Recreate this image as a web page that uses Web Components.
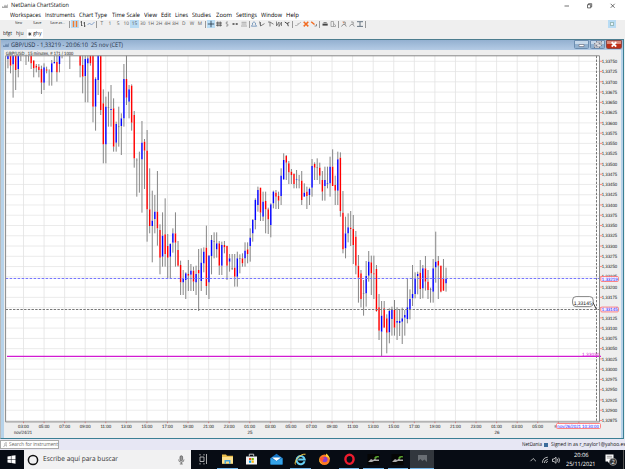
<!DOCTYPE html>
<html lang="es">
<head>
<meta charset="utf-8">
<title>NetDania ChartStation</title>
<style>
  html, body { margin: 0; height: 100%; overflow: hidden; }
  body { font-family: "Open Sans", "Noto Sans", sans-serif; color: #333; background: #efefef; text-rendering: geometricPrecision; }
</style>
</head>
<body>
<chart-station></chart-station>

<script>
// => Texto ajustado a un ancho fijo (atributo w)
customElements.define('fit-text', class extends HTMLElement {
  constructor() {
    super();
    this.attachShadow({mode: 'open'}).innerHTML = `
      <style>
        :host { display: inline-block; white-space: nowrap; flex: none; line-height: 1.2; }
        span { display: inline-block; transform-origin: 0 50%; }
      </style><span><slot></slot></span>`;
  }
  connectedCallback() {
    const w = parseFloat(this.getAttribute('w'));
    if (!w) return;
    const span = this.shadowRoot.querySelector('span');
    const natural = span.getBoundingClientRect().width;
    span.style.transform = `scaleX(${w / natural})`;
    this.style.width = w + 'px';
  }
});

// => Barra de titulo de la aplicacion
customElements.define('title-bar', class extends HTMLElement {
  constructor() {
    super();
    this.attachShadow({mode: 'open'}).innerHTML = `
      <style>
        :host { display: flex; align-items: center; height: 11px; padding: 0 9px 0 2px; background: #fff; font-size: 6px; color: #111; }
        svg { display: block; }
        .logo { margin-right: 2.5px; }
        .win { margin-left: auto; }
      </style>
      <svg class="logo" width="6" height="6" viewBox="0 0 6 6"><path d="M0 5V3L1.5 4L3 1.5L4 3L5.8 1V5Z" fill="#aaa"/></svg>
      <fit-text w="58">NetDania ChartStation</fit-text>
      <svg class="win" width="52" height="8" viewBox="0 0 52 8" fill="none" stroke="#333" stroke-width=".7">
        <path d="M.5 4H5M23.5 2.7h3.2v3.2h-3.2zM24.5 2.7V1.7h3.2v3.2h-1M46.7 1.8l4 4M50.7 1.8l-4 4"/>
      </svg>`;
  }
});

// => Menu principal
customElements.define('menu-bar', class extends HTMLElement {
  constructor() {
    super();
    const items = [['Workspaces', 31], ['Instruments', 30], ['Chart Type', 28], ['Time Scale', 28], ['View', 13], ['Edit', 10],
      ['Lines', 13], ['Studies', 19], ['Zoom', 16], ['Settings', 21], ['Window', 21], ['Help', 13]];
    this.attachShadow({mode: 'open'}).innerHTML = `
      <style>
        :host { display: flex; align-items: center; gap: 4.2px; height: 9px; padding-left: 10px; background: #fff; font-size: 6px; color: #000; }
      </style>` + items.map(i => `<fit-text w="${i[1]}">${i[0]}</fit-text>`).join('');
  }
});

// => Barra de herramientas
const ICONS = {
  candle: '<path d="M2.5 1v6M5.5 1v6" stroke="#f27a30" stroke-width="1.4"/>',
  bars: '<path d="M2.5 1v5M1.5 2h1M5.5 2v5M2.5 5.5h1M4.5 3h1M5.5 6h1"/>',
  line: '<path d="M.5 5L2.5 3L4.5 5L7.5 2" stroke="#6b8fc4"/>',
  cross: '<path d="M4 .8v6.4M.8 4h6.4" stroke="#234"/>',
  hash: '<path d="M2.8 1.5v5M5.2 1.5v5M1 3h6M1 5.2h6"/>',
  s: '<path d="M5 2H3.3V4H4.8V6H3" stroke="#888"/>',
  dots: '<path d="M1.5 4h2M4.7 4h2" stroke-width="1.4"/>',
  list: '<path d="M1.5 2.3h5M1.5 4h5M1 6h6" stroke="#999"/>',
  bell: '<path d="M1.3 6.2L2.5 4.8V3Q4 .5 5.5 3V4.8L6.7 6.2Z" stroke="#668bb5"/>',
  tool1: '<path d="M1.5 1.5L2.6 6L6.5 3.6M2.5 2V6" stroke="#666"/>',
  tool2: '<path d="M1 2H3L6.5 4.2M3 2V6.5" stroke="#666"/>',
  tool3: '<path d="M1.5 1.5V6L4 2V6.5L6.5 2V6" stroke="#666"/>',
  tool4: '<path d="M1.8 2L4 3.5L6.3 2.5M4.5 3.5L5.3 6.2" stroke-width="1"/>',
  pen: '<path d="M1 5.5H3L7 2M3 4.3L5 3.5" stroke="#aaa"/>',
  del: '<path d="M1.7 1.8L6.3 6.4M6.3 1.8L1.7 6.4" stroke="#f26b21" stroke-width="1.5"/>',
  move: '<path d="M1.2 1.7L4.5 4.5" stroke="#f26b21" stroke-width="1.4"/><path d="M4.5 6h2V4" stroke="#777"/>',
  print: '<path d="M2.5 2.6h3.2" stroke="#777" stroke-width="1"/><path d="M1.5 4.6h5.2" stroke-width="2"/>',
  copy: '<path d="M2 1.5H4.5V6.5H2ZM4.5 3.5L6.5 5V6.5H4" stroke="#999"/>',
  zin: '<path d="M1.5 6.5L3.3 4.3M3 2H5.2V4.4H3.2M5 4.5L6.3 6.5" stroke="#777"/><path d="M2.6 2l1.2 1" stroke="#f26b21"/>',
  zout: '<path d="M1.5 6.5L3.3 4.3M3 2H5.2V4.4H3.2M5 4.5L6.3 6.5" stroke="#888"/>',
  fit: '<path d="M1 1.7h6M1 6.4h6M4 2v4" stroke="#456"/>'
};
customElements.define('tool-bar', class extends HTMLElement {
  constructor() {
    super();
    const on = ['candle', '15', 'cross'];
    const cell = n => `<div class="cell${on.includes(n) ? ' on' : ''}">` +
      (ICONS[n] ? `<svg width="8" height="8" viewBox="0 0 8 8" fill="none" stroke="#444" stroke-width=".8">${ICONS[n]}</svg>` : n) + '</div>';
    const groups = ['candle bars line', 'T 1 5 10 15 30 1H 2H 4H 8H D W M', 'cross hash s dots list', 'bell tool1 tool2 tool3 tool4',
      'pen del move', 'print copy', 'zin zout fit', ''];
    this.attachShadow({mode: 'open'}).innerHTML = `
      <style>
        :host { display: flex; align-items: center; height: 8.5px; padding-right: 9px; background: #efefef; font-size: 4.8px; color: #555; }
        .file { display: flex; gap: 11px; width: 53px; padding-left: 15px; font-size: 3.8px; color: #333; }
        .file fit-text:last-child { margin-left: -3px; }
        .sep { width: .7px; height: 6.5px; margin: 0 .95px; background: #999; }
        .cell { flex: none; width: 8.2px; height: 8.2px; display: flex; align-items: center; justify-content: center; line-height: 1; }
        .on { background: #b9dcf4; }
        .end { margin-left: auto; width: 8px; height: 8px; background: #b9dcf4; display: flex; align-items: center; justify-content: center; }
        .end i { width: 2px; height: 2px; border: .8px solid #9bb; background: #e8f4fb; }
      </style>
      <div class="file"><fit-text w="7">New</fit-text><fit-text w="8.5">Save</fit-text><fit-text w="15">Save as...</fit-text></div>` +
      groups.map(g => '<div class="sep"></div>' + (g ? g.split(' ').map(cell).join('') : '')).join('') +
      '<div class="end"><i></i></div>';
  }
});

// => Pestañas de espacios de trabajo
customElements.define('tab-strip', class extends HTMLElement {
  constructor() {
    super();
    this.attachShadow({mode: 'open'}).innerHTML = `
      <style>
        :host { display: flex; height: 10px; align-items: center; padding-left: 3px; font-size: 5.4px; color: #222; background: #efefef; }
        .t { margin-right: 4px; }
        .on { display: flex; align-items: center; height: 9px; padding: 0 1.5px; margin-left: -1px; background: #fff; }
        svg { margin-right: 1.6px; }
      </style>
      <fit-text class="t" w="9">bfgt</fit-text><fit-text class="t" w="7.5">hju</fit-text>
      <div class="on"><svg width="3.6" height="4" viewBox="0 0 4 4" stroke="#222" stroke-width=".8"><path d="M2 0v4M.3 1l3.4 2M3.7 1L.3 3"/></svg><fit-text w="8.5">ghy</fit-text></div>`;
  }
});

// => Velas: "max min [color techo suelo]", alturas en tercios de pixel desde la base de cada tramo
const RUNS = [
  {base: 150, bars: `17 55 b 17 27,17 70 r 17 47,17 143 b 17 43,17 120 r 17 60,17 82 b 17 57,17 33,17 17,17 45,17 35,17 57 r 17 40,
    30 82 r 32 55,42 67 r 47 53,42 82 r 50 60,47 132 r 57 98,40 120 b 52 98,50 70 r 58 62,58 107,30 107 b 40 67,17 40 b 36 40,17 95 r 36 67,
    17 67 b 17 42,17 25,17 17,17 17,17 57,17 17,17 17,17 17,17 82 r 17 47,17 130 r 45 80,
    17 157 b 27 78,17 157 b 25 40,17 47 r 17 40,17 217 r 17 170,82 242 b 87 170,17 135 b 17 90,17 195 r 17 180,118 340 r 160 283,140 340 b 170 283,125 230 k 171 173,
    105 230 b 177 180,145 305 r 175 290,215 305 b 222 278,170 290 k 229 231,190 315 b 205 228,42 230 b 87 205,17 165 r 87 143,105 205 b 118 155,103 242 r 107 218,183 353 r 195 325`},
  {base: 360, bars: `115 230 k 119 121,95 218,3 278 b 68 118,57 207 r 65 92,30 365 r 92 268,145 340 r 268 318,212 427 b 302 318,225 340 b 275 297,153 377 r 275 325,313 463 r 330 413,
    277 440 b 347 410,235 440 r 343 402,342 475 r 378 413,370 475 b 372 410,325 398 b 340 368,277 440 r 340 368,363 440 r 390 437,422 525 r 435 487,450 525 b 475 487,457 537 b 460 480,
    420 513 r 462 467,432 513 b 452 464,440 513 r 452 485,437 525 b 462 487,387 573 r 450 460,385 513 b 428 483,382 457 b 395 430,317 525 r 383 498,405 537 b 407 487,345 463 b 360 408,
    337 415 k 363 365,337 413 b 370 388,363 465 r 370 437,365 465 b 375 437,363 400 r 375 382,377 480 r 378 437,402 455 b 415 425,402 450 k 444 446,402 500 r 443 470,395 500 b 415 470,
    403 460 k 414 416,400 440 r 415 430,367 440 b 392 415,367 430 r 388 402`},
  {base: 420, bars: `265 365 b 293 318,237 305 b 240 280,175 268 b 180 240,140 215 b 150 195,143 243 r 143 218,155 243 b 185 230,155 280 r 183 208,203 282 r 208 238,190 292 b 193 255,152 205 b 155 190,
    150 207 r 158 170,155 207 r 168 182,85 195 b 107 168,40 120 b 60 118,45 120 r 48 68,63 132 r 70 97,87 132 r 95 105,100 145 r 102 132,90 145 b 118 120,105 145 k 119 121,
    93 195 r 122 180,130 170 b 158 170,140 207 r 155 168,143 195 b 147 165,57 170 b 78 143,67 120 r 72 83,55 120 k 82 84,68 132 r 83 107,93 182 r 120 155,80 182 b 120 138,
    80 145 b 129 131,50 170 b 80 130,28 138 r 80 138,107 195 r 135 152,35 195 b 58 152,37 230 r 53 213,153 340 r 218 328,230 355 b 280 325,220 307 b 262 280,213 318 r 263 267,
    225 372 r 267 315,273 403 r 290 377`},
  {base: 690, bars: `75 218 r 107 143,120 232 r 130 207,150 257 k 189 191,93 230 b 138 190,63 155 b 95 137,77 195 r 97 130,77 207 r 130 133,105 245 r 117 243,192 330 r 232 302,213 378 b 257 305,
    213 293 r 235 293,253 370 r 265 308,235 340 b 243 307,230 317 b 240 267,210 317 r 240 293,232 330 b 273 278,237 318 b 273 279,233 342 b 265 275,240 317 b 255 263,147 280 b 232 267,
    178 268 b 207 240,105 228 b 192 205,127 205 b 145 192,125 193 b 132 138,90 207 r 128 177,105 205 b 115 175,78 182 r 115 155,120 207 r 155 180,173 218 k 177 179,87 218 b 115 185,
    5 158 b 95 112,78 207 r 93 107,107 187 r 107 185,87 183 r 145 182,113 185 b 147 160`}
];
const COLORS = {b: '#00f', r: '#f00', k: '#555'};

// => El grafico: rejilla, velas, cursores y ejes
customElements.define('candle-chart', class extends HTMLElement {
  constructor() {
    super();
    // el svg empieza en (4, 50) de la ventana
    const X0 = 5.6, X1 = 599.5, Y0 = 55.8, Y1 = 421.6;
    let out = `<rect x="${X0}" y="${Y0}" width="${X1 - X0}" height="${Y1 - Y0}" fill="#fff"/>`;
    const txt = (x, y, w, s, extra = '') => `<text x="${x}" y="${y}" textLength="${w}" lengthAdjust="spacingAndGlyphs" ${extra}>${s}</text>`;

    for (let i = 0; i <= 35; i++) {
      const y = 61.3 + i * 10.263;
      const price = (1.3375 - i * 0.00025).toFixed(5).replace('.', ',');
      out += `<path d="M${X0} ${y}H${X1}" stroke="#e6e6e6" stroke-width=".8"/><path d="M600 ${y}h2" stroke="#f66" stroke-width=".7"/>`;
      // 1,33150 queda tapado por la etiqueta del cursor
      if (i !== 24) out += txt(601.7, y + (i === 21 ? .7 : 1.7), 15.5, price);
    }
    for (let i = 0; i <= 27; i++) {
      const x = 23.5 + i * 20.57;
      const h = String((3 + i * 2) % 24).padStart(2, '0');
      out += `<path d="M${x} ${Y0}V${Y1}" stroke="#e2e2e2" stroke-width=".8"/><path d="M${x} 421.6v1.6" stroke="#f55" stroke-width=".8"/>`;
      if (i < 26) out += txt(x - 5.4, 427.8, 10.8, h + ':00');
    }
    out += txt(14, 433.8, 18, 'nov/24/21') + txt(247.4, 433.8, 5, '25') + txt(494.4, 433.8, 5, '26');
    // la etiqueta de las 07:00 asoma por detras de la fecha del cursor
    out += `<path d="M555.2 425.2V427.6" stroke="#555" stroke-width=".8"/>`;

    let n = 0;
    RUNS.forEach(run => run.bars.split(',').forEach(s => {
      const [hi, lo, c, top, bot] = s.trim().split(' ');
      const x = 7.95 + n++ * 2.577;
      const y = v => (run.base + Number(v)) / 3;
      if (hi === lo) return;
      // la mecha se parte para no asomar bajo el cuerpo
      out += `<path d="M${x} ${y(hi)}V${y(c ? top : lo)}` + (c ? `M${x} ${y(bot)}V${y(lo)}` : '') + `" stroke="#808080" stroke-width=".95"/>`;
      if (c) out += `<rect x="${x - .72}" y="${y(top)}" width="1.44" height="${Math.max((bot - top) / 3, .7)}" fill="${COLORS[c]}"/>`;
    }));

    out += `
      <path d="M${X0} 278.5H${X1}" stroke="#7777ff" stroke-dasharray="2.6 1.4"/>
      <path d="M${X0} 309.5H${X1}M596.5 ${Y0}V${Y1}" stroke="#777" stroke-dasharray="2.4 1.3"/>
      <path d="M7 356.4H601" stroke="#d21bd2" stroke-width="1.2"/>
      <path d="M${X0} ${Y1 + .3}V${Y0}H${X1}V${Y1 + .3}Z" fill="none" stroke="#888" stroke-width="1"/>
      <rect x="600.8" y="276.5" width="17.6" height="5" rx="1" fill="#f3efff" stroke="#f66" stroke-width=".8"/>
      <rect x="600.8" y="307.1" width="17.6" height="4.8" rx="1" fill="#f3efff" stroke="#f66" stroke-width=".8"/>
      <rect x="556.5" y="423.5" width="44" height="5" rx="1" fill="#fff" stroke="#f66" stroke-width=".8"/>
      <rect x="572.6" y="296.6" width="20.6" height="10" rx="3.5" fill="#fff" stroke="#666" stroke-width=".8"/>
      <path d="M593 302.5L596.3 309.2" stroke="#444" stroke-width="1"/>` +
      txt(601.7, 280.8, 16, '1,33219', 'class="cur"') +
      txt(601.7, 311.2, 16, '1,33145', 'class="cur"') +
      txt(557.3, 427.8, 41.5, 'nov/26/2021 10:30:00', 'class="cur"') +
      txt(573.7, 304.9, 18, '1,33145', 'class="tip"') +
      txt(582, 355.8, 17.5, '1,33030', 'class="lvl"') +
      txt(5.8, 54.8, 67.5, 'GBP/USD , 15 minutes, # 171 / 1000');

    this.attachShadow({mode: 'open'}).innerHTML = `
      <style>
        :host { display: block; flex: 1; background: #eee; }
        svg { display: block; }
        text { font-family: "Liberation Sans", Arial, sans-serif; font-size: 4.7px; fill: #111; }
        .cur { fill: #11f; }
        .lvl { fill: #d21bd2; }
        .tip { font-size: 5.2px; }
      </style>
      <svg width="617" height="387.5" viewBox="4 50 617 387.5">${out}</svg>`;
  }
});

// => Ventana interior con marco azul
customElements.define('chart-window', class extends HTMLElement {
  constructor() {
    super();
    this.attachShadow({mode: 'open'}).innerHTML = `
      <style>
        :host { display: block; box-sizing: border-box; height: 400.5px; background: #b7d3ea; border-top: 1px solid #4d7d8f; border-bottom: 1px solid #3b7f94; border-left: 1px solid #bbb; border-right: 1px solid #3b7f94; margin-right: 1.5px; }
        header { display: flex; align-items: center; height: 10.5px; padding: 0 1px 0 2px; background: linear-gradient(#93b0d0, #b4cbe5); font-size: 6.2px; color: #1e2f47; }
        header > svg { margin-right: 2px; }
        .btns { display: flex; gap: 1px; margin-left: auto; align-self: flex-start; }
        .btns i { box-sizing: border-box; width: 15.2px; height: 9.5px; border: .7px solid #6c8db0; border-radius: 0 0 1.5px 1.5px; background: linear-gradient(#c6d8ea 45%, #93b1cf 50%); display: flex; align-items: center; justify-content: center; }
        .btns i:last-child { background: linear-gradient(#dd8b7c 45%, #bf3019 50%); border-color: #8b4a48; }
        .body { display: flex; padding: 0 2.5px 0 3px; }
      </style>
      <header>
        <svg width="6" height="6" viewBox="0 0 6 6"><path d="M0 5V3L1.5 4L3 1.5L4 3L5.8 1V5Z" fill="#6f8caf"/></svg>
        <fit-text w="112">GBP/USD - 1,33219 - 20:06:10&nbsp; 25 nov (CET)</fit-text>
        <div class="btns">
          <i><svg width="7" height="6"><path d="M1 2.5h5v2h-5z" fill="#fff" stroke="#667" stroke-width=".6"/></svg></i>
          <i><svg width="8" height="7"><path d="M3 .8h4v3.5h-4zM1 2.8h4v3.4h-4z" fill="none" stroke="#556" stroke-width="1.5"/><path d="M3 .8h4v3.5h-4zM1 2.8h4v3.4h-4z" fill="none" stroke="#fff" stroke-width=".9"/></svg></i>
          <i><svg width="8" height="7"><path d="M1.7 1.2l4.5 4.5M6.2 1.2l-4.5 4.5" stroke="#fff" stroke-width="1.9"/></svg></i>
        </div>
      </header>
      <div class="body"><slot></slot></div>`;
  }
});

// => Barra de estado
customElements.define('status-bar', class extends HTMLElement {
  constructor() {
    super();
    this.attachShadow({mode: 'open'}).innerHTML = `
      <style>
        :host { display: flex; align-items: center; height: 10.7px; background: #e7e7f4; font-size: 5.4px; color: #111; }
        .search { box-sizing: border-box; display: flex; align-items: center; gap: 2px; width: 58.5px; height: 9px; padding-left: 1.5px; border: .7px solid #aaa; background: #fff; color: #666; }
        .user { display: flex; align-items: center; gap: 2.4px; margin-left: auto; }
        i { width: 4.2px; height: 4.2px; background: #3b6c9c; }
      </style>
      <div class="search"><svg width="5" height="6" fill="none" stroke="#999" stroke-width=".7"><circle cx="3" cy="2" r="1.3"/><path d="M2 3L.5 5M3 4h2"/></svg><fit-text w="49">Search for instrument</fit-text></div>
      <div class="user"><fit-text w="20">NetDania</fit-text><i></i><fit-text w="74.5">Signed in as r_naylor1@yahoo.es</fit-text></div>`;
  }
});

// => Barra de tareas de Windows
const APPS = [
  ['', '<g fill="none" stroke="#bbb" stroke-width=".9"><path d="M3 2.5V1M7 2.5V1M3 10v1.5M7 10v1.5M3 4h4v4.5h-4zM9.5 1v10"/></g>'],
  ['open', '<path d="M1 1.5h4l1 1.2h6v8H1z" fill="#e9bd4b"/><path d="M1 4h11v6.5H1z" fill="#fbe08f"/><path d="M3.5 10.8V7h6v3.8H8V8.5H5v2.3z" fill="#47a5dc"/>'],
  ['', '<path d="M1 3.5h11v8H1z" fill="#f2f2f2"/><path d="M4.3 3.3V1.2h4.4v2.1" fill="none" stroke="#eee" stroke-width=".8"/><path d="M4 5h2.2v2.2H4z" fill="#e8502a"/><path d="M6.6 5h2.2v2.2H6.6z" fill="#7fba00"/><path d="M4 7.6h2.2v2.2H4z" fill="#00a4ef"/><path d="M6.6 7.6h2.2v2.2H6.6z" fill="#ffb900"/>'],
  ['', '<path d="M.5 5L6.5 .8L12.5 5V11.5H.5z" fill="#1474c4"/><path d="M2 4.5h9L6.5 8z" fill="#fff"/><path d="M.5 5L6.5 8.2L12.5 5V11.5H.5z" fill="#35a3e8"/>'],
  ['open', '<path d="M10.6 8.2A4.1 4.1 0 1 1 10.7 6.4H4.3" fill="none" stroke="#66d0f5" stroke-width="2"/><path d="M1.5 11.5C-.5 9 5.5 .5 11.5 1.2" fill="none" stroke="#f5c842" stroke-width="1"/>'],
  ['', '<circle cx="6.5" cy="6.8" r="5.3" fill="#ff7a22"/><path d="M1.3 3.5Q1 9 5 11.8Q0 10 1.3 3.5M8 .5Q12 3 11.8 7Q11 4 8 3.6z" fill="#ffcf38"/><circle cx="6.7" cy="6.5" r="2.8" fill="#8a3fd0"/><path d="M2 5Q5 3.5 7 5.4Q4.5 5.6 5 8.3Q2 8 2 5" fill="#ff5038"/>'],
  ['open', '<ellipse cx="6.5" cy="6.3" rx="4.1" ry="4.6" fill="none" stroke="#ee1c2e" stroke-width="2.4"/>'],
  ['open', '<path d="M.5 1h12v11H.5z" fill="#050505"/><path d="M1 9L4 6l2 1L8 5.6l1 .8H12V8H7L5 9z" fill="#aaa"/><path d="M7 5.2Q8 2.4 12 3.2V4.5Q9.5 3.8 9 6z" fill="#5caa32"/>'],
  ['open', '<path d="M.5 1h12v11H.5z" fill="#050505"/><path d="M1 9L4 6l2 1L8 5.6l1 .8H12V8H7L5 9z" fill="#aaa"/><path d="M7 5.2Q8 2.4 12 3.2V4.5Q9.5 3.8 9 6z" fill="#5caa32"/>'],
  ['open active', '<path d="M2 2h9v7L8.5 6.5L6.3 8L4.5 6L2 8z" fill="#6a6f74"/>']
];
customElements.define('task-bar', class extends HTMLElement {
  constructor() {
    super();
    this.attachShadow({mode: 'open'}).innerHTML = `
      <style>
        :host { display: flex; height: 19.5px; background: #070c14; color: #fff; overflow: hidden; }
        svg { display: block; flex: none; }
        .start { display: flex; width: 23.5px; align-items: center; justify-content: center; }
        .find { box-sizing: border-box; display: flex; align-items: center; width: 167.5px; padding: 0 5px 0 3.5px; background: #f1f1f2; color: #333; font-size: 6.9px; }
        .find svg:first-child { margin-right: 3.5px; }
        .find svg:last-child { margin-left: auto; }
        .app { box-sizing: border-box; width: 24.35px; padding: 0 2px; display: flex; align-items: center; justify-content: center; border-bottom: 1.5px solid transparent; background-clip: padding-box; }
        .open { border-image: linear-gradient(90deg, transparent 10%, #73b5e8 10%, #73b5e8 90%, transparent 90%) 1; border-width: 0 0 1.5px; }
        .active { background: #32373d; border-image: none; border-bottom: 1.5px solid #73b5e8; }
        .tray { display: flex; align-items: center; margin-left: auto; font-size: 5.8px; }
        .clock { display: flex; flex-direction: column; align-items: center; gap: 2px; margin: 0 9.5px 0 3.5px; }
        .edge { width: .7px; height: 100%; background: #555; margin-left: 6px; margin-right: 1px; }
      </style>
      <div class="start"><svg width="9" height="9" viewBox="0 0 9 9" fill="#fff"><path d="M.5 1.4L3.9 .9V4.2H.5zM4.4 .8L8.5 .2V4.2H4.4zM.5 4.7H3.9V8L.5 7.5zM4.4 4.7H8.5V8.7L4.4 8.1z"/></svg></div>
      <div class="find">
        <svg width="12" height="12"><circle cx="6" cy="6" r="4.6" fill="none" stroke="#111" stroke-width="1.5"/></svg>
        <fit-text w="75">Escribe aquí para buscar</fit-text>
        <svg width="9" height="10" fill="none" stroke="#555" stroke-width=".7"><rect x="3" y=".8" width="2.6" height="5" rx="1.3" fill="#999"/><path d="M1.6 4.5Q1.6 7.2 4.3 7.2Q7 7.2 7 4.5M4.3 7.2V9M2.8 9h3"/></svg>
      </div>` +
      APPS.map(a => `<div class="app ${a[0]}"><svg width="13" height="13" viewBox="0 0 13 13">${a[1]}</svg></div>`).join('') + `
      <div class="tray">
        <svg width="34" height="10" viewBox="0 0 34 10" fill="none" stroke="#ddd" stroke-width=".8">
          <path d="M1.5 6.2L4.2 3.5L6.9 6.2"/>
          <path d="M13.5 7.8Q13.5 2.7 18.8 2.2M15.3 8Q15.3 4.9 18.8 4.4M17.2 8Q17.2 6.8 18.8 6.4"/>
          <path d="M23.5 4V6.5H25L27 8.3V2.2L25 4zM28.3 3.8Q29.3 5.2 28.3 6.7M29.7 2.7Q31.4 5.2 29.7 7.8" />
        </svg>
        <div class="clock"><fit-text w="14.5">20:06</fit-text><fit-text w="29.5">25/11/2021</fit-text></div>
        <svg width="12" height="13" viewBox="0 0 12 13"><path d="M.5 1.5h8v7H4.5L3 10V8.5H.5z" fill="#fff"/><path d="M1.8 3.3h5.4M1.8 5h5.4" stroke="#555" stroke-width=".6"/><circle cx="8" cy="8.8" r="3.6" fill="#333" stroke="#bbb" stroke-width=".6"/><text x="6.4" y="10.9" font-size="5.8" fill="#fff">2</text></svg>
        <div class="edge"></div>
      </div>`;
  }
});

customElements.define('chart-station', class extends HTMLElement {
  constructor() {
    super();
    this.attachShadow({mode: 'open'}).innerHTML = `
      <style>
        :host { display: flex; flex-direction: column; width: 625px; height: 469px; }
        title-bar, menu-bar, tool-bar, tab-strip, chart-window, status-bar, task-bar { flex: none; }
        chart-window { margin-top: .3px; }
      </style>
      <title-bar></title-bar>
      <menu-bar></menu-bar>
      <tool-bar></tool-bar>
      <tab-strip></tab-strip>
      <chart-window><candle-chart></candle-chart></chart-window>
      <status-bar></status-bar>
      <task-bar></task-bar>`;
  }
});
</script>
</body>
</html>
